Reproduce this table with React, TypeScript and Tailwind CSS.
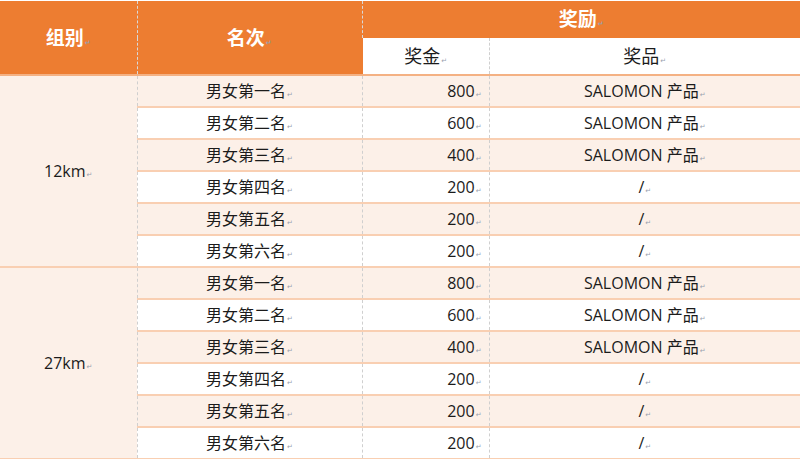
import React from "react";

const rows = [
  { rank: "男女第一名", money: "800", prize: "SALOMON 产品" },
  { rank: "男女第二名", money: "600", prize: "SALOMON 产品" },
  { rank: "男女第三名", money: "400", prize: "SALOMON 产品" },
  { rank: "男女第四名", money: "200", prize: "/" },
  { rank: "男女第五名", money: "200", prize: "/" },
  { rank: "男女第六名", money: "200", prize: "/" },
];

const groups = ["12km", "27km"];

// Word paragraph mark after every cell text
function Mark() {
  return <span className="ml-px text-[7px] leading-none text-gray-400 font-['DejaVu_Sans']">↵</span>;
}

const cell = "[border-left:1px_dashed_#cfcfcf] border-b-2 border-b-[#f9cfb2]";

export default function App() {
  return (
    <div className="w-[800px] h-[459px] overflow-hidden bg-white pt-px font-['Open_Sans','Noto_Sans_CJK_SC',sans-serif] text-[#1b1b1b]">
      <table className="w-[800px] table-fixed border-collapse">
        <colgroup>
          <col className="w-[137px]" />
          <col className="w-[225px]" />
          <col className="w-[127px]" />
          <col className="w-[311px]" />
        </colgroup>
        <thead>
          <tr className="h-[37px]">
            <th rowSpan={2} className="bg-[#ed7d31] text-white text-[19px] font-bold border-b-2 border-b-[#f4b183] pt-px">
              组别<Mark />
            </th>
            <th rowSpan={2} className="bg-[#ed7d31] text-white text-[19px] font-bold [border-left:1px_dashed_#d9d9d9] border-b-2 border-b-[#f4b183] pt-px">
              名次<Mark />
            </th>
            <th colSpan={2} className="bg-[#ed7d31] text-white text-[19px] font-bold [border-left:1px_dashed_#d9d9d9]">
              奖励<Mark />
            </th>
          </tr>
          <tr className="h-[37px]">
            <th className="bg-white font-normal text-[18px] border-l-2 border-l-[#ed7d31] border-b-2 border-b-[#f4b183]">
              奖金<Mark />
            </th>
            <th className="bg-white font-normal text-[18px] [border-left:1px_dashed_#cfcfcf] border-b-2 border-b-[#f4b183]">
              奖品<Mark />
            </th>
          </tr>
        </thead>
        <tbody>
          {groups.map((g) =>
            rows.map((r, i) => (
              <tr key={g + i} className={`h-[32px] text-[16px] ${i % 2 === 0 ? "bg-[#fcf0e8]" : "bg-white"}`}>
                {i === 0 && (
                  <td rowSpan={6} className="bg-[#fcf0e8] text-center border-b-2 border-b-[#f9cfb2]">
                    {g}
                    <Mark />
                  </td>
                )}
                <td className={`text-center ${cell}`}>
                  {r.rank}
                  <Mark />
                </td>
                <td className={`text-right pr-[7px] ${cell}`}>
                  {r.money}
                  <Mark />
                </td>
                <td className={`text-center ${cell}`}>
                  {r.prize}
                  <Mark />
                </td>
              </tr>
            ))
          )}
        </tbody>
      </table>
    </div>
  );
}
